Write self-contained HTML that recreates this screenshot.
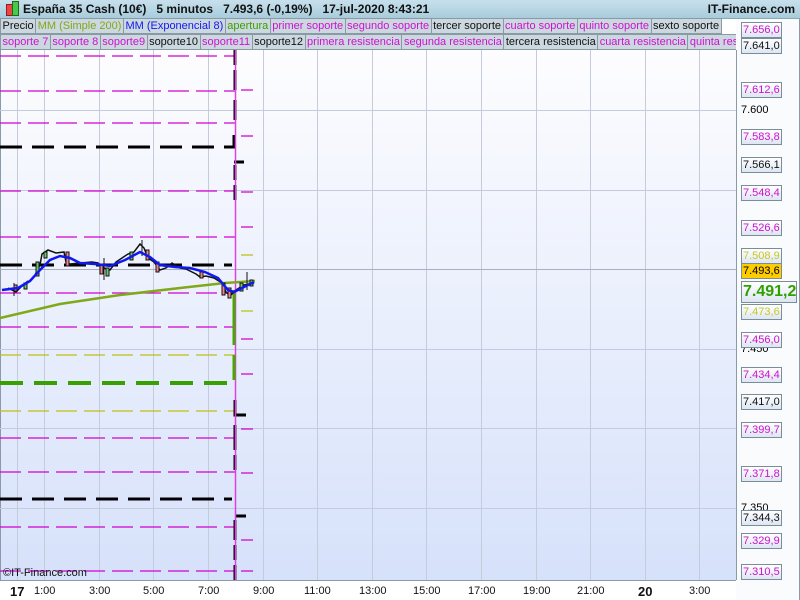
<!DOCTYPE html>
<html><head><meta charset="utf-8"><style>
body{margin:0;width:800px;height:600px;overflow:hidden;background:#fff;font-family:"Liberation Sans",sans-serif}
.top{position:absolute;left:0;top:0;width:800px;height:18px;background:linear-gradient(#c8e0ec,#a8ccdc);border-bottom:1px solid #8aa;font-size:12px;font-weight:bold;line-height:18px;color:#111}
.leg{position:absolute;left:0;height:16px;font-size:11px;line-height:15px;white-space:nowrap;overflow:hidden;width:736px}
.leg span{display:inline-block;background:#ccd8e0;border:1px solid #8a9aa4;padding:0 1.5px;margin-right:-1px;height:14px}
.lab{position:absolute;left:741px;width:38px;height:14px;border:1px solid #7a8d9a;background:linear-gradient(#fff,#dde6f2);font-size:11px;line-height:14px;padding-left:1px}
.ax{position:absolute;top:585px;font-size:11px;color:#111}
</style></head><body>
<svg width="800" height="600" style="position:absolute;left:0;top:0">
<defs><linearGradient id="bg" x1="0" y1="0" x2="0" y2="1"><stop offset="0" stop-color="#fdfdff"/><stop offset="1" stop-color="#d6e1fa"/></linearGradient></defs>
<rect x="0" y="50" width="736" height="530" fill="url(#bg)"/>
<rect x="736" y="18" width="63" height="582" fill="#fafbfc"/>
<line x1="736.5" y1="50" x2="736.5" y2="580" stroke="#8a9aa8"/>
<line x1="799.5" y1="18" x2="799.5" y2="600" stroke="#8a9aa8"/>
<line x1="0" y1="580.5" x2="736" y2="580.5" stroke="#8a9aa8"/>
<line x1="0.5" y1="50" x2="0.5" y2="580" stroke="#8a9aa8"/>
<g stroke="#c4ccdc" stroke-width="1">
<line x1="17.5" y1="50" x2="17.5" y2="580"/><line x1="44.5" y1="50" x2="44.5" y2="580"/><line x1="99.5" y1="50" x2="99.5" y2="580"/><line x1="153.5" y1="50" x2="153.5" y2="580"/><line x1="208.5" y1="50" x2="208.5" y2="580"/><line x1="263.5" y1="50" x2="263.5" y2="580"/><line x1="317.5" y1="50" x2="317.5" y2="580"/><line x1="372.5" y1="50" x2="372.5" y2="580"/><line x1="426.5" y1="50" x2="426.5" y2="580"/><line x1="481.5" y1="50" x2="481.5" y2="580"/><line x1="536.5" y1="50" x2="536.5" y2="580"/><line x1="590.5" y1="50" x2="590.5" y2="580"/><line x1="645.5" y1="50" x2="645.5" y2="580"/><line x1="699.5" y1="50" x2="699.5" y2="580"/>
<line x1="0" y1="110.5" x2="736" y2="110.5"/><line x1="0" y1="190.5" x2="736" y2="190.5"/><line x1="0" y1="269.5" x2="736" y2="269.5" stroke="#a8b0c0"/><line x1="0" y1="349.5" x2="736" y2="349.5"/><line x1="0" y1="428.5" x2="736" y2="428.5"/><line x1="0" y1="508.5" x2="736" y2="508.5"/>
</g>
<path fill="none" stroke="#d000d0" stroke-width="1.3" stroke-dasharray="21 7" d="M0 56H235M0 91H235M0 123H235M0 191H235M0 237H235M0 293H235M0 327H235M0 438H235M0 472H235M0 527H235M0 571H235"/>
<path fill="none" stroke="#c0c010" stroke-width="1.3" stroke-dasharray="21 7" d="M0 355H235M0 411H235"/>
<path fill="none" stroke="#000" stroke-width="3" stroke-dasharray="22 10" d="M0 147H232M0 265H232M0 499H232"/>
<path fill="none" stroke="#38a000" stroke-width="4" stroke-dasharray="23 11" d="M0 383H230"/>
<path fill="none" stroke="#d000d0" stroke-width="1.3" d="M241 90H253M241 136H253M241 192H253M241 227H253M241 339H253M241 374H253M241 429H253M241 473H253M241 540H253M241 571H253"/>
<path fill="none" stroke="#c0c010" stroke-width="1.3" d="M241 255H253M241 311H253"/>
<g fill="none" stroke="#000" stroke-width="3">
<path d="M235 50V65M235 70V90M235 100V120M232 147H234V135M234 162H244M235 165V180M235 185V200M235 400V415H246M235 425V450M235 455V470M235 516H246M235 520V540M235 545V560M235 565V580"/>
</g>
<line x1="235.5" y1="50" x2="235.5" y2="580" stroke="#e040e0" stroke-width="1.5"/>
<path d="M234 290V345M234 355V380" stroke="#48a800" stroke-width="3"/>
<path d="M0 318 L60 304 L120 295 L180 288 L225 283 L255 281" stroke="#80a818" stroke-width="2.5" fill="none"/>
<path d="M2 290 L6 289 M8 288 L16 292 L22 286 L28 281 M34 277 L40 265 L42 254 L48 250 L56 253 L64 252 L66 262 L70 264 L80 263 L92 262 L98 263 L104 268 L110 270 L116 262 L122 258 L128 254 L134 252 L140 244 L144 248 L148 258 L154 262 L160 270 L166 268 L172 263 L180 268 L186 269 L196 274 L200 277 L206 276 L214 278 L222 283 L226 292 L230 296 L236 290 L244 285 L254 283" stroke="#111" stroke-width="1.5" fill="none"/>
<g stroke="#111" stroke-width="1">
<rect x="14" y="285" width="3" height="6" fill="#e88"/><rect x="24" y="283" width="3" height="6" fill="#6c6"/><rect x="36" y="262" width="3" height="14" fill="#6c6"/><rect x="44" y="252" width="3" height="6" fill="#6c6"/><rect x="66" y="252" width="3" height="14" fill="#e88"/><rect x="100" y="264" width="3" height="10" fill="#e88"/><rect x="106" y="268" width="3" height="8" fill="#6c6"/><rect x="130" y="252" width="3" height="8" fill="#6c6"/><rect x="146" y="250" width="3" height="10" fill="#e88"/><rect x="156" y="262" width="3" height="10" fill="#e88"/><rect x="200" y="272" width="3" height="6" fill="#e88"/><rect x="222" y="283" width="3" height="12" fill="#e88"/><rect x="228" y="288" width="3" height="10" fill="#e88"/><rect x="240" y="283" width="3" height="8" fill="#6c6"/><rect x="250" y="280" width="3" height="6" fill="#6c6"/>
<line x1="14" y1="283" x2="14" y2="296"/><line x1="104" y1="258" x2="104" y2="280"/><line x1="142" y1="240" x2="142" y2="256"/><line x1="247" y1="272" x2="247" y2="290"/>
</g>
<path d="M2 290 L18 288 L30 281 L40 270 L50 260 L60 256 L70 258 L80 263 L95 264 L110 266 L125 260 L140 252 L150 257 L160 265 L175 267 L190 268 L205 272 L218 278 L228 290 L234 292 L242 288 L254 282" stroke="#1018f0" stroke-width="2.5" fill="none"/>
</svg>
<div class="top"><span style="position:absolute;left:6px;top:4px;width:5px;height:10px;background:#e44;border:1px solid #822"></span><span style="position:absolute;left:12px;top:1px;width:5px;height:13px;background:#4c4;border:1px solid #262"></span><span style="position:absolute;left:23px">España 35 Cash (10€)&nbsp;&nbsp;&nbsp;5 minutos&nbsp;&nbsp;&nbsp;7.493,6 (-0,19%)&nbsp;&nbsp;&nbsp;17-jul-2020 8:43:21</span><span style="position:absolute;right:5px">IT-Finance.com</span></div>
<div class="leg" style="top:18px"><span style="color:#111">Precio</span><span style="color:#80a818">MM (Simple 200)</span><span style="color:#1018f0">MM (Exponencial 8)</span><span style="color:#38a000">apertura</span><span style="color:#d010d0">primer soporte</span><span style="color:#d010d0">segundo soporte</span><span style="color:#111">tercer soporte</span><span style="color:#d010d0">cuarto soporte</span><span style="color:#d010d0">quinto soporte</span><span style="color:#111">sexto soporte</span></div>
<div class="leg" style="top:34px"><span style="color:#d010d0">soporte 7</span><span style="color:#d010d0">soporte 8</span><span style="color:#d010d0">soporte9</span><span style="color:#111">soporte10</span><span style="color:#d010d0">soporte11</span><span style="color:#111">soporte12</span><span style="color:#d010d0">primera resistencia</span><span style="color:#d010d0">segunda resistencia</span><span style="color:#111">tercera resistencia</span><span style="color:#d010d0">cuarta resistencia</span><span style="color:#d010d0">quinta resistencia</span></div>
<div style="position:absolute;left:741px;top:104px;font-size:11px">7.600</div>
<div style="position:absolute;left:741px;top:343px;font-size:11px">7.450</div>
<div style="position:absolute;left:741px;top:502px;font-size:11px">7.350</div>
<div class="lab" style="top:22px;color:#d010d0">7.656,0</div>
<div class="lab" style="top:38px;color:#111">7.641,0</div>
<div class="lab" style="top:82px;color:#d010d0">7.612,6</div>
<div class="lab" style="top:129px;color:#d010d0">7.583,8</div>
<div class="lab" style="top:157px;color:#111">7.566,1</div>
<div class="lab" style="top:185px;color:#d010d0">7.548,4</div>
<div class="lab" style="top:220px;color:#d010d0">7.526,6</div>
<div class="lab" style="top:248px;color:#c8c820">7.508,9</div>
<div class="lab" style="top:263px;color:#000;background:#ffcc00">7.493,6</div>
<div class="lab" style="top:281px;color:#30a000;font-size:16px;font-weight:bold;height:20px;line-height:20px;width:53px">7.491,2</div>
<div class="lab" style="top:304px;color:#c8c820">7.473,6</div>
<div class="lab" style="top:332px;color:#d010d0">7.456,0</div>
<div class="lab" style="top:367px;color:#d010d0">7.434,4</div>
<div class="lab" style="top:394px;color:#111">7.417,0</div>
<div class="lab" style="top:422px;color:#d010d0">7.399,7</div>
<div class="lab" style="top:466px;color:#d010d0">7.371,8</div>
<div class="lab" style="top:510px;color:#111">7.344,3</div>
<div class="lab" style="top:533px;color:#d010d0">7.329,9</div>
<div class="lab" style="top:564px;color:#d010d0">7.310,5</div>
<div style="position:absolute;left:3px;top:567px;font-size:11px;color:#111">©IT-Finance.com</div>
<div class="ax" style="left:10px;font-weight:bold;font-size:13px;top:584px">17</div>
<div class="ax" style="left:34px">1:00</div><div class="ax" style="left:89px">3:00</div><div class="ax" style="left:143px">5:00</div><div class="ax" style="left:198px">7:00</div><div class="ax" style="left:253px">9:00</div><div class="ax" style="left:304px">11:00</div><div class="ax" style="left:359px">13:00</div><div class="ax" style="left:413px">15:00</div><div class="ax" style="left:468px">17:00</div><div class="ax" style="left:523px">19:00</div><div class="ax" style="left:577px">21:00</div>
<div class="ax" style="left:638px;font-weight:bold;font-size:13px;top:584px">20</div><div class="ax" style="left:689px">3:00</div>
</body></html>
